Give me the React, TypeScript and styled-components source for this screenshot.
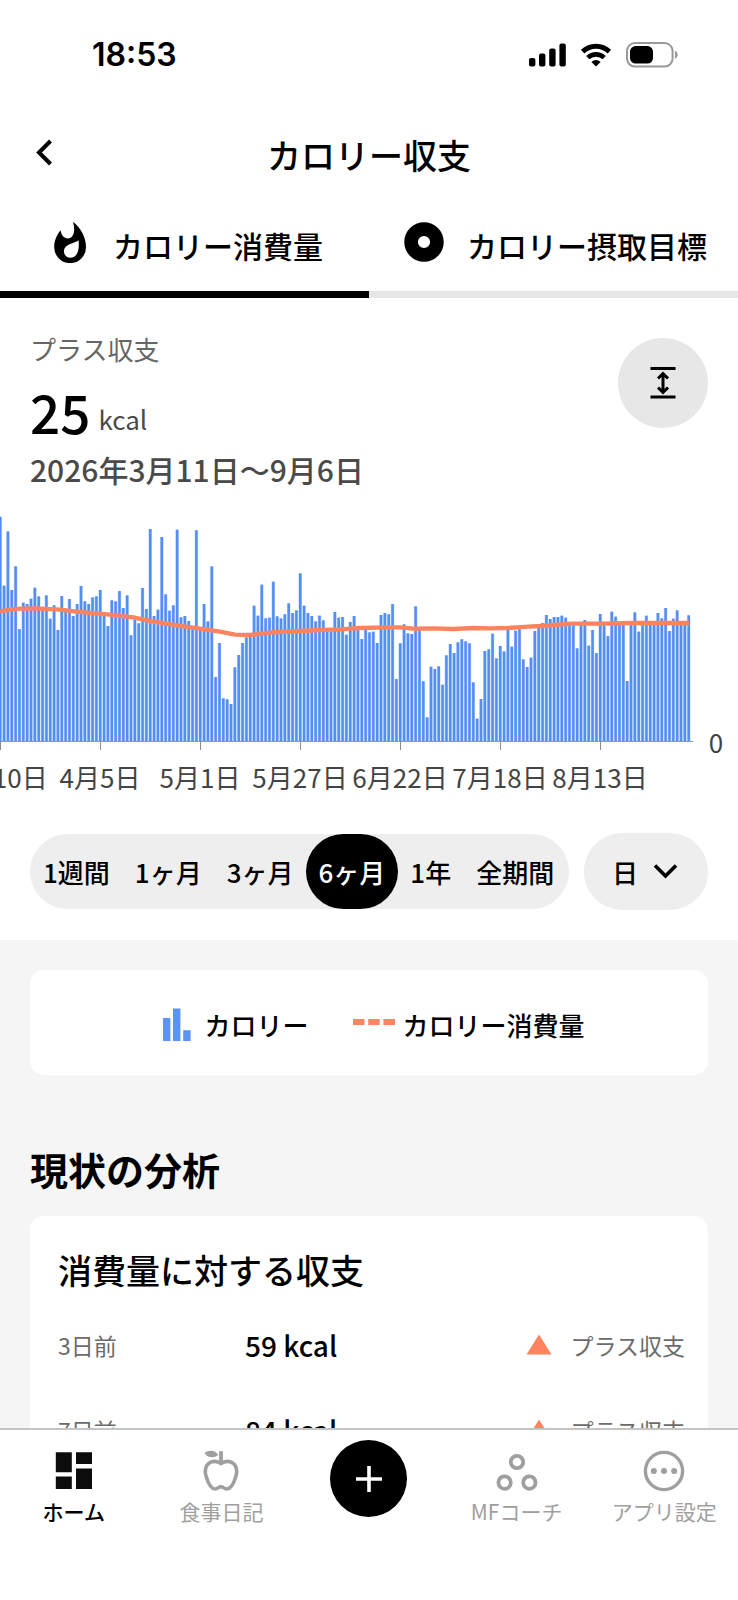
import React, { useState } from "react";
import styled, { createGlobalStyle } from "styled-components";

const GlobalStyle = createGlobalStyle`
  *, *::before, *::after { box-sizing: border-box; }
  body {
    margin: 0;
    background: #fff;
    color: #000;
    font-family: "Noto Sans CJK JP", "Noto Sans", sans-serif;
  }
  button, select {
    margin: 0;
    padding: 0;
    border: 0;
    background: none;
    color: inherit;
    font: inherit;
    cursor: pointer;
  }
  h1, h2, h3, p { margin: 0; }
`;

const Screen = styled.div`
  display: flex;
  flex-direction: column;
  height: 100vh;
`;

const StatusBar = styled.div`
  display: flex;
  flex: none;
  align-items: center;
  justify-content: space-between;
  height: 110px;
  padding: 0 60px 0 92px;
`;

const Clock = styled.time`
  font: 600 32px/40px Inter, sans-serif;
`;

const StatusIcons = styled.div`
  display: flex;
  align-items: center;
  gap: 14px;
`;

const Header = styled.header`
  display: grid;
  flex: none;
  grid-template-columns: 1fr auto 1fr;
  align-items: center;
  height: 92px;
  padding: 0 24px 2px;
`;

const BackButton = styled.button`
  display: flex;
  align-items: center;
  justify-content: center;
  width: 40px;
  height: 52px;
  padding-bottom: 6px;
`;

const Title = styled.h1`
  font-size: 34px;
  font-weight: 500;
  line-height: 48px;
`;

const Tabs = styled.div`
  display: grid;
  flex: none;
  grid-template-columns: 1fr 1fr;
`;

const Tab = styled.button<{ $active: boolean }>`
  display: flex;
  align-items: center;
  justify-content: center;
  gap: 23px;
  height: 96px;
  padding: 0 0 4px 4px;
  border-bottom: 7px solid ${(p) => (p.$active ? "#000" : "#e6e6e6")};
  font-size: 30px;
  font-weight: 500;
  line-height: 44px;
  white-space: nowrap;

  svg {
    flex: none;
    margin-bottom: 6px;
  }
`;

const Content = styled.main`
  flex: 1;
  min-height: 0;
  overflow-y: auto;
  background: #f5f5f5;
  scrollbar-width: none;
`;

const ChartPanel = styled.section`
  padding-bottom: 30px;
  background: #fff;
`;

const Summary = styled.div`
  display: flex;
  align-items: flex-start;
  justify-content: space-between;
  padding: 31px 30px 4px;
`;

const SummaryLabel = styled.p`
  color: #666;
  font-size: 26px;
  line-height: 40px;
`;

const SummaryValue = styled.p`
  display: flex;
  align-items: flex-end;
  gap: 8px;
  font-size: 53px;
  font-weight: 500;
  line-height: 84px;
`;

const Unit = styled.span`
  margin-bottom: 14px;
  color: #4a4a4a;
  font-size: 26px;
  font-weight: 400;
  line-height: 40px;
`;

const SummaryPeriod = styled.p`
  color: #4a4a4a;
  font-size: 30px;
  font-weight: 500;
  line-height: 32px;
`;

const RoundButton = styled.button`
  display: flex;
  align-items: center;
  justify-content: center;
  width: 90px;
  height: 90px;
  margin-top: 9px;
  border-radius: 50%;
  background: #e7e7e7;
`;

const ChartSvg = styled.svg`
  display: block;
  width: 100%;
  height: auto;
`;

const AxisLabel = styled.text`
  fill: #444;
  font-size: 26px;
  text-anchor: middle;
`;

const Controls = styled.div`
  display: flex;
  align-items: center;
  justify-content: space-between;
  padding: 29px 30px 0;
`;

const RangeGroup = styled.div`
  display: flex;
  padding: 0 2px 0 1px;
  border-radius: 38px;
  background: #eee;
`;

const RangeButton = styled.button<{ $active: boolean }>`
  height: 75px;
  padding: 0 13px 0 12px;
  border-radius: 38px;
  background: ${(p) => (p.$active ? "#000" : "transparent")};
  color: ${(p) => (p.$active ? "#fff" : "#000")};
  font-size: 26px;
  font-weight: 500;
  white-space: nowrap;
`;

const UnitPicker = styled.label`
  display: grid;
  align-items: center;
  width: 124px;
  height: 77px;
  border-radius: 38px;
  background: #eee;

  select, svg { grid-area: 1 / 1; }
  select {
    height: 100%;
    padding-left: 28px;
    border-radius: 38px;
    appearance: none;
    font-size: 26px;
    font-weight: 500;
  }
  svg {
    justify-self: end;
    margin-right: 30px;
    pointer-events: none;
  }
`;

const Card = styled.section`
  margin: 0 30px;
  border-radius: 14px;
  background: #fff;
`;

const Legend = styled(Card)`
  display: flex;
  align-items: center;
  justify-content: center;
  gap: 44px;
  height: 105px;
  margin-top: 30px;
  padding: 4px 0 0 10px;
`;

const LegendItem = styled.div<{ $gap: number }>`
  display: flex;
  align-items: center;
  gap: ${(p) => p.$gap}px;
  font-size: 26px;
  font-weight: 500;
  line-height: 40px;
`;

const SectionTitle = styled.h2`
  margin: 66px 30px 19px;
  font-size: 38px;
  font-weight: 700;
  line-height: 56px;
`;

const AnalysisCard = styled(Card)`
  padding: 29px 23px 30px 28px;
`;

const CardTitle = styled.h3`
  margin-bottom: 7px;
  font-size: 34px;
  font-weight: 500;
  line-height: 50px;
`;

const AnalysisTable = styled.table`
  width: 100%;
  border-spacing: 0;
`;

const AnalysisRow = styled.tr`
  height: 85px;
  line-height: 40px;
`;

const Period = styled.th`
  width: 187px;
  padding: 0;
  color: #6b6b6b;
  font-size: 23px;
  font-weight: 400;
  text-align: left;
`;

const Amount = styled.td`
  padding: 0;
  font-size: 28px;
  font-weight: 500;
`;

const Verdict = styled.td`
  padding: 0;
`;

const VerdictBody = styled.div`
  display: flex;
  align-items: center;
  justify-content: flex-end;
  gap: 18px;
  color: #6b6b6b;
  font-size: 23px;
`;

const BottomNav = styled.nav`
  display: grid;
  flex: none;
  grid-template-columns: repeat(5, 1fr);
  height: 172px;
  border-top: 2px solid #c4c4c4;
  background: #fff;
`;

const NavButton = styled.button<{ $active?: boolean }>`
  display: flex;
  flex-direction: column;
  align-items: center;
  gap: 3px;
  height: 100px;
  padding-top: 20px;
  color: ${(p) => (p.$active ? "#000" : "#9f9f9f")};
  font-size: 21px;
  font-weight: ${(p) => (p.$active ? 500 : 400)};
  line-height: 32px;
  white-space: nowrap;
`;

const AddButton = styled.button`
  display: flex;
  align-items: center;
  justify-content: center;
  justify-self: center;
  width: 77px;
  height: 77px;
  margin-top: 10px;
  border-radius: 50%;
  background: #000;
`;

/* Top of each day's bar, in thirds of a unit below the top of the plot. */
const BAR_TOPS = [
  50, 257, 94, 270, 199, 387, 308, 312, 296, 263, 289, 330, 286, 356, 316, 390, 288, 332, 297, 348,
  312, 258, 304, 312, 292, 289, 270, 345, 378, 301, 304, 273, 324, 286, 406, 360, 370, 264, 327, 87,
  348, 329, 111, 283, 332, 316, 89, 352, 348, 363, 382, 91, 390, 312, 364, 199, 531, 429, 595, 598,
  612, 502, 465, 429, 412, 405, 317, 347, 254, 355, 353, 245, 349, 355, 343, 310, 339, 331, 220, 317,
  339, 348, 364, 347, 361, 392, 392, 336, 353, 351, 404, 366, 348, 388, 417, 390, 397, 395, 429, 345,
  339, 343, 312, 537, 430, 373, 400, 402, 319, 388, 544, 652, 500, 507, 499, 554, 466, 432, 459, 427,
  418, 424, 430, 547, 656, 597, 453, 448, 401, 475, 438, 454, 388, 440, 392, 388, 478, 501, 473, 393,
  382, 369, 345, 357, 351, 351, 347, 353, 375, 375, 445, 375, 360, 437, 390, 459, 342, 370, 408, 335,
  350, 372, 372, 543, 372, 337, 395, 372, 347, 372, 372, 339, 355, 324, 393, 356, 331, 372, 372, 346,
];

const EXPENDITURE: [number, number][] = [
  [0, 334], [30, 329], [60, 326], [110, 325], [180, 329], [250, 337], [330, 344], [400, 352],
  [450, 363], [530, 376], [600, 386], [660, 395], [705, 404], [750, 405], [820, 397], [900, 393],
  [960, 390], [1020, 388], [1080, 384], [1160, 382], [1200, 382], [1240, 386], [1300, 385],
  [1360, 387], [1420, 384], [1470, 385], [1524, 384], [1584, 380], [1624, 378], [1674, 374],
  [1714, 371], [1814, 371], [1894, 369], [2067, 369],
];

const DATES = ["3月10日", "4月5日", "5月1日", "5月27日", "6月22日", "7月18日", "8月13日"];

const DAY_STEP = 100 / 26;
const PLOT_TOP = 11;
const BASELINE = 252;

function CalorieChart() {
  return (
    <ChartSvg viewBox="0 0 738 315" role="img" aria-label="カロリー収支">
      {BAR_TOPS.map((top, day) => {
        const y = PLOT_TOP + top / 3;
        const x = day * DAY_STEP;
        return (
          <g key={day}>
            <rect x={x - 1.6} y={y} width="3.6" height={BASELINE - y} fill="#a9d0ff" opacity="0.7" />
            <rect x={x - 1} y={y} width="2.5" height={BASELINE - y} fill="#568df1" />
          </g>
        );
      })}
      <path d={`M0 ${BASELINE + 0.5}H693`} stroke="#8e99ac" />
      {DATES.map((date, i) => (
        <g key={date}>
          <path d={`M${i * 100 + 0.5} ${BASELINE}v9`} stroke="#8c8c8c" />
          <AxisLabel x={i * 100} y="299">{date}</AxisLabel>
        </g>
      ))}
      <polyline
        points={EXPENDITURE.map(([x, y]) => `${x / 3},${PLOT_TOP + y / 3}`).join(" ")}
        fill="none"
        stroke="#ff835e"
        strokeWidth="4.4"
        strokeLinejoin="round"
      />
      <AxisLabel x="716" y="264">0</AxisLabel>
    </ChartSvg>
  );
}

const SignalIcon = () => (
  <svg width="37" height="24" viewBox="0 0 37 24" aria-hidden="true">
    <rect x="0" y="15" width="6.4" height="8.6" rx="2" />
    <rect x="10" y="10.6" width="6.4" height="13" rx="2" />
    <rect x="20.2" y="5.6" width="6.4" height="18" rx="2" />
    <rect x="30.4" y="0.6" width="6.4" height="23" rx="2" />
  </svg>
);

const WifiIcon = () => (
  <svg width="32" height="24" viewBox="0 0 32 24" aria-hidden="true">
    <path d="M2.6 8.6a19.4 19.4 0 0 1 26.8 0" fill="none" stroke="#000" strokeWidth="5" />
    <path d="M7.8 14.6a12 12 0 0 1 16.4 0" fill="none" stroke="#000" strokeWidth="4.6" />
    <path d="M16 23.6 11.4 18.9a6.6 6.6 0 0 1 9.2 0Z" />
  </svg>
);

const BatteryIcon = () => (
  <svg width="52" height="26" viewBox="0 0 52 26" aria-hidden="true">
    <rect x="1" y="1" width="45.6" height="23.6" rx="8" fill="none" stroke="#999" strokeWidth="2" />
    <rect x="4" y="4" width="23" height="17.6" rx="5.6" />
    <path d="M49 8.8c3.6 1.4 3.6 6.6 0 8Z" fill="#999" />
  </svg>
);

const FlameIcon = () => (
  <svg width="40" height="42" viewBox="0 0 40 42" aria-hidden="true">
    <path
      fillRule="evenodd"
      d="M23 .8C31 7 36 16.500 36 26.200A15.900 15.900 0 0 1 4.200 26.200C4.200 20 6.600 14 10.700 9.300C11.200 14.300 14 17.400 17.600 17.400C24 17.400 25.500 9.500 23 .8ZM28.600 19.200C24.500 22.600 14.600 22.600 14 29.600C13.700 33.500 16.400 36.800 20.300 36.800C27.400 36.800 29.600 29 28.600 19.200Z"
    />
  </svg>
);

const DiscIcon = () => (
  <svg width="40" height="40" viewBox="0 0 40 40" aria-hidden="true">
    <circle cx="20" cy="20" r="12.900" fill="none" stroke="#000" strokeWidth="13.600" />
  </svg>
);

const ExpandIcon = () => (
  <svg width="28" height="34" viewBox="0 0 28 34" fill="none" stroke="#000" aria-hidden="true">
    <path d="M1.500 2.500h25M1.500 31h25" strokeWidth="3.200" />
    <path d="M14 8v18M9 12.500l5-5 5 5M9 21.500l5 5 5-5" strokeWidth="3" />
  </svg>
);

const AppleIcon = () => (
  <svg width="40" height="42" viewBox="0 0 40 42" aria-hidden="true">
    <path d="M3.500 3C7.500-.6 14.500-.2 17.200 5 13 8.400 6 8 3.500 3Z" fill="currentColor" />
    <path d="M20 1.200V14" stroke="currentColor" strokeWidth="3.800" />
    <path
      d="M20 13.600C17.500 11.800 13.500 10.700 9.800 12.200 4.500 14.500 3.300 20.500 5 26c1.800 6.200 4.800 13 9.200 13 3 0 3-2.200 5.800-2.200s2.800 2.200 5.800 2.200c4.400 0 7.400-6.800 9.200-13 1.700-5.500.5-11.500-4.800-13.800-3.700-1.500-7.700-.4-10.200 1.400Z"
      fill="none"
      stroke="currentColor"
      strokeWidth="3.600"
    />
  </svg>
);

const HomeIcon = () => (
  <svg width="40" height="42" viewBox="0 0 40 42" fill="#0c0c0c" aria-hidden="true">
    <path d="M1.800 2.200h16v20h-16ZM22 2.200h16V14H22ZM1.800 26.600h16V39h-16ZM22 18.600h16V39H22Z" />
  </svg>
);

const CoachIcon = () => (
  <svg width="42" height="42" viewBox="0 0 42 42" fill="none" stroke="currentColor" strokeWidth="3.800" aria-hidden="true">
    <circle cx="21" cy="12" r="6.200" />
    <circle cx="8.600" cy="32.600" r="6.200" />
    <circle cx="33.400" cy="32.600" r="6.200" />
  </svg>
);

const MoreIcon = () => (
  <svg width="42" height="42" viewBox="0 0 42 42" fill="currentColor" aria-hidden="true">
    <circle cx="21" cy="21" r="18.600" fill="none" stroke="currentColor" strokeWidth="3.400" />
    <circle cx="10.800" cy="21" r="3" />
    <circle cx="21" cy="21" r="3" />
    <circle cx="31.200" cy="21" r="3" />
  </svg>
);

const RANGES = ["1週間", "1ヶ月", "3ヶ月", "6ヶ月", "1年", "全期間"];

const ANALYSIS = [
  { period: "3日前", amount: "59 kcal", verdict: "プラス収支" },
  { period: "7日前", amount: "84 kcal", verdict: "プラス収支" },
];

export default function App() {
  const [tab, setTab] = useState(0);
  const [range, setRange] = useState("6ヶ月");

  return (
    <Screen>
      <GlobalStyle />
      <StatusBar>
        <Clock>18:53</Clock>
        <StatusIcons>
          <SignalIcon />
          <WifiIcon />
          <BatteryIcon />
        </StatusIcons>
      </StatusBar>

      <Header>
        <BackButton aria-label="戻る">
          <svg width="17" height="27" viewBox="0 0 17 27" aria-hidden="true">
            <path d="M14.500 2 3 13.500 14.500 25" fill="none" stroke="#000" strokeWidth="4" />
          </svg>
        </BackButton>
        <Title>カロリー収支</Title>
      </Header>

      <Tabs role="tablist">
        <Tab role="tab" aria-selected={tab === 0} $active={tab === 0} onClick={() => setTab(0)}>
          <FlameIcon />
          カロリー消費量
        </Tab>
        <Tab role="tab" aria-selected={tab === 1} $active={tab === 1} onClick={() => setTab(1)}>
          <DiscIcon />
          カロリー摂取目標
        </Tab>
      </Tabs>

      <Content>
        <ChartPanel>
          <Summary>
            <div>
              <SummaryLabel>プラス収支</SummaryLabel>
              <SummaryValue>
                25<Unit>kcal</Unit>
              </SummaryValue>
              <SummaryPeriod>2026年3月11日〜9月6日</SummaryPeriod>
            </div>
            <RoundButton aria-label="縦軸を広げる">
              <ExpandIcon />
            </RoundButton>
          </Summary>
          <CalorieChart />
          <Controls>
            <RangeGroup role="group" aria-label="期間">
              {RANGES.map((r) => (
                <RangeButton key={r} $active={r === range} aria-pressed={r === range} onClick={() => setRange(r)}>
                  {r}
                </RangeButton>
              ))}
            </RangeGroup>
            <UnitPicker>
              <select aria-label="集計単位" defaultValue="日">
                <option>日</option>
                <option>週</option>
                <option>月</option>
              </select>
              <svg width="25" height="17" viewBox="0 0 25 17" aria-hidden="true">
                <path d="M2 2.500 12.500 13 23 2.500" fill="none" stroke="#000" strokeWidth="3.600" />
              </svg>
            </UnitPicker>
          </Controls>
        </ChartPanel>

        <Legend>
          <LegendItem $gap={13}>
            <svg width="28" height="34" viewBox="0 0 28 34" fill="#5b93fa" aria-hidden="true">
              <path d="M0 10h7.400v23H0ZM10 .6h7.400V33H10ZM20.200 22.300h7.400V33h-7.400Z" />
            </svg>
            カロリー
          </LegendItem>
          <LegendItem $gap={8}>
            <svg width="42" height="14" viewBox="0 0 42 14" fill="#ff8562" aria-hidden="true">
              <path d="M0 1h11.500v6H0ZM15.200 1h11.500v6H15.200ZM30.400 1H42v6H30.400Z" />
            </svg>
            カロリー消費量
          </LegendItem>
        </Legend>

        <SectionTitle>現状の分析</SectionTitle>
        <AnalysisCard>
          <CardTitle>消費量に対する収支</CardTitle>
          <AnalysisTable>
            <tbody>
              {ANALYSIS.map((row) => (
                <AnalysisRow key={row.period}>
                  <Period scope="row">{row.period}</Period>
                  <Amount>{row.amount}</Amount>
                  <Verdict>
                    <VerdictBody>
                      <svg width="26" height="22" viewBox="0 0 26 22" aria-hidden="true">
                        <path d="M13 .5 25.500 20.500H.5Z" fill="#ff835e" />
                      </svg>
                      {row.verdict}
                    </VerdictBody>
                  </Verdict>
                </AnalysisRow>
              ))}
            </tbody>
          </AnalysisTable>
        </AnalysisCard>
      </Content>

      <BottomNav>
        <NavButton $active>
          <HomeIcon />
          ホーム
        </NavButton>
        <NavButton>
          <AppleIcon />
          食事日記
        </NavButton>
        <AddButton aria-label="追加">
          <svg width="28" height="28" viewBox="0 0 28 28" aria-hidden="true">
            <path d="M14 1v26M1 14h26" stroke="#fff" strokeWidth="3.600" />
          </svg>
        </AddButton>
        <NavButton>
          <CoachIcon />
          MFコーチ
        </NavButton>
        <NavButton>
          <MoreIcon />
          アプリ設定
        </NavButton>
      </BottomNav>
    </Screen>
  );
}
